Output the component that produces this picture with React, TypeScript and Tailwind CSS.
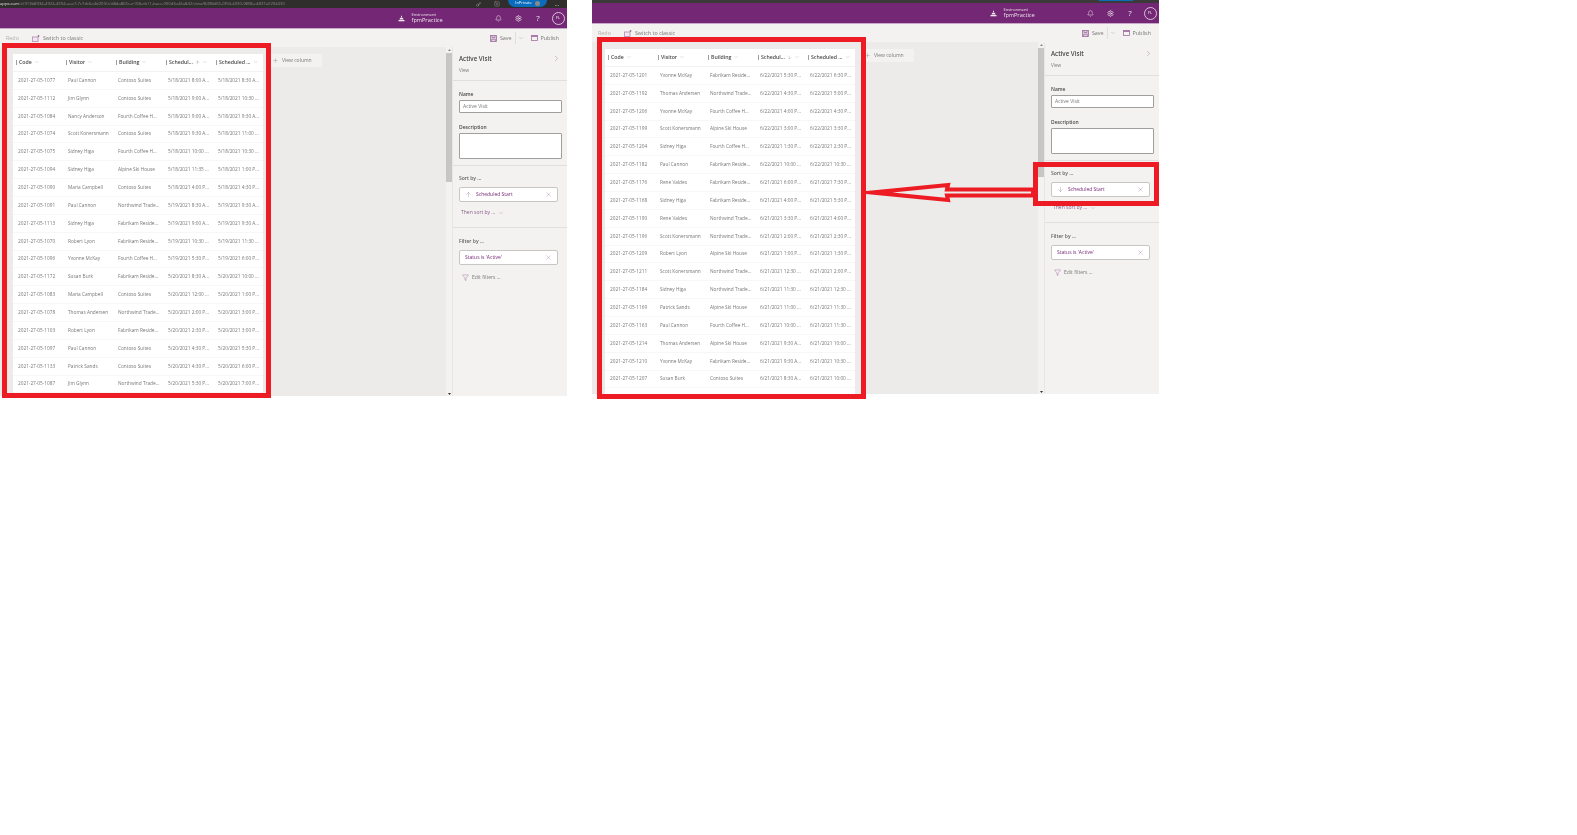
import type { ReactNode } from "react";
import { ArrowDown, ArrowUp, Bell, ChevronDown, ChevronRight, Filter, Key, Plus, Settings, SquarePlus, X } from "lucide-react";

type Row = [string, string, string, string, string];

const CF = "Contoso Suites";
const FC = "Fourth Coffee H...";
const NW = "Northwind Trade...";
const FR = "Fabrikam Reside...";
const AS = "Alpine Ski House";

const ascRows: Row[] = [
  ["1077", "Paul Cannon", CF, "5/18/2021 8:00 A...", "5/18/2021 8:30 A..."],
  ["1112", "Jim Glynn", CF, "5/18/2021 9:00 A...", "5/18/2021 10:30 ..."],
  ["1084", "Nancy Anderson", FC, "5/18/2021 9:00 A...", "5/18/2021 9:30 A..."],
  ["1074", "Scott Konersmann", CF, "5/18/2021 9:30 A...", "5/18/2021 11:00 ..."],
  ["1075", "Sidney Higa", FC, "5/18/2021 10:00 ...", "5/18/2021 10:30 ..."],
  ["1094", "Sidney Higa", AS, "5/18/2021 11:35 ...", "5/18/2021 1:00 P..."],
  ["1090", "Maria Campbell", CF, "5/18/2021 4:00 P...", "5/18/2021 4:30 P..."],
  ["1091", "Paul Cannon", NW, "5/19/2021 8:30 A...", "5/19/2021 9:30 A..."],
  ["1113", "Sidney Higa", FR, "5/19/2021 9:00 A...", "5/19/2021 9:30 A..."],
  ["1070", "Robert Lyon", FR, "5/19/2021 10:30 ...", "5/19/2021 11:30 ..."],
  ["1096", "Yvonne McKay", FC, "5/19/2021 5:30 P...", "5/19/2021 6:00 P..."],
  ["1172", "Susan Burk", FR, "5/20/2021 8:30 A...", "5/20/2021 10:00 ..."],
  ["1083", "Maria Campbell", CF, "5/20/2021 12:00 ...", "5/20/2021 1:00 P..."],
  ["1078", "Thomas Andersen", NW, "5/20/2021 2:00 P...", "5/20/2021 3:00 P..."],
  ["1103", "Robert Lyon", FR, "5/20/2021 2:30 P...", "5/20/2021 3:00 P..."],
  ["1097", "Paul Cannon", CF, "5/20/2021 4:30 P...", "5/20/2021 5:30 P..."],
  ["1133", "Patrick Sands", CF, "5/20/2021 4:30 P...", "5/20/2021 6:00 P..."],
  ["1087", "Jim Glynn", NW, "5/20/2021 5:30 P...", "5/20/2021 7:00 P..."],
];

const descRows: Row[] = [
  ["1201", "Yvonne McKay", FR, "6/22/2021 5:30 P...", "6/22/2021 6:30 P..."],
  ["1192", "Thomas Andersen", NW, "6/22/2021 4:30 P...", "6/22/2021 5:00 P..."],
  ["1206", "Yvonne McKay", FC, "6/22/2021 4:00 P...", "6/22/2021 4:30 P..."],
  ["1199", "Scott Konersmann", AS, "6/22/2021 3:00 P...", "6/22/2021 3:30 P..."],
  ["1204", "Sidney Higa", FC, "6/22/2021 1:30 P...", "6/22/2021 2:30 P..."],
  ["1182", "Paul Cannon", FR, "6/22/2021 10:00 ...", "6/22/2021 10:30 ..."],
  ["1176", "Rene Valdes", FR, "6/21/2021 6:00 P...", "6/21/2021 7:30 P..."],
  ["1168", "Sidney Higa", FR, "6/21/2021 4:00 P...", "6/21/2021 5:30 P..."],
  ["1190", "Rene Valdes", NW, "6/21/2021 3:30 P...", "6/21/2021 4:00 P..."],
  ["1196", "Scott Konersmann", NW, "6/21/2021 2:00 P...", "6/21/2021 2:30 P..."],
  ["1209", "Robert Lyon", AS, "6/21/2021 1:00 P...", "6/21/2021 1:30 P..."],
  ["1211", "Scott Konersmann", NW, "6/21/2021 12:30 ...", "6/21/2021 2:00 P..."],
  ["1184", "Sidney Higa", NW, "6/21/2021 11:30 ...", "6/21/2021 12:30 ..."],
  ["1169", "Patrick Sands", AS, "6/21/2021 11:00 ...", "6/21/2021 11:30 ..."],
  ["1163", "Paul Cannon", FC, "6/21/2021 10:00 ...", "6/21/2021 11:30 ..."],
  ["1214", "Thomas Andersen", AS, "6/21/2021 9:30 A...", "6/21/2021 10:00 ..."],
  ["1210", "Yvonne McKay", FR, "6/21/2021 9:30 A...", "6/21/2021 10:30 ..."],
  ["1207", "Susan Burk", CF, "6/21/2021 8:30 A...", "6/21/2021 10:00 ..."],
];

function HeaderCell({ label, sort }: { label: string; sort?: "asc" | "desc" }) {
  return (
    <div className="w-[50px] shrink-0 flex items-center pl-[3px]">
      <span className="w-[1px] h-[5px] bg-[#a19f9d] mr-[2px]" />
      <span className="font-semibold text-[5.2px] text-[#4a4847] whitespace-nowrap">{label}</span>
      {sort === "asc" && <ArrowUp className="ml-[2px] w-[5px] h-[5px] text-[#8a8886]" strokeWidth={1.5} />}
      {sort === "desc" && <ArrowDown className="ml-[2px] w-[5px] h-[5px] text-[#a19f9d]" strokeWidth={1.5} />}
      <ChevronDown className="ml-[2px] w-[6px] h-[6px] text-[#a19f9d]" strokeWidth={1.2} />
    </div>
  );
}

function Grid({ rows, sort }: { rows: Row[]; sort: "asc" | "desc" }) {
  return (
    <div className="w-[250px] h-full bg-white overflow-hidden shrink-0">
      <div className="h-[18px] flex items-center border-b border-[#f3f2f1]">
        <HeaderCell label="Code" />
        <HeaderCell label="Visitor" />
        <HeaderCell label="Building" />
        <HeaderCell label="Schedul..." sort={sort} />
        <HeaderCell label="Scheduled ..." />
      </div>
      {rows.map((r) => (
        <div key={r[0]} className="h-[17.86px] flex items-center border-b border-[#f8f7f6] text-[4.75px] text-[#7a7876]">
          <div className="w-[50px] pl-[5px] whitespace-nowrap">2021-27-05-{r[0]}</div>
          <div className="w-[50px] pl-[5px] whitespace-nowrap">{r[1]}</div>
          <div className="w-[50px] pl-[5px] whitespace-nowrap">{r[2]}</div>
          <div className="w-[50px] pl-[5px] whitespace-nowrap">{r[3]}</div>
          <div className="w-[50px] pl-[5px] whitespace-nowrap">{r[4]}</div>
        </div>
      ))}
    </div>
  );
}

function Chip({ children, label }: { children?: ReactNode; label: string }) {
  return (
    <div className="w-[99px] h-[15px] bg-white border border-[#c8c6c4] rounded-[2px] flex items-center px-[5px] text-[5px] text-[#742774]">
      {children}
      <span className="whitespace-nowrap">{label}</span>
      <X className="ml-auto w-[7px] h-[7px] text-[#8a5a8a]" strokeWidth={1} />
    </div>
  );
}

function Pane({ sort }: { sort: "asc" | "desc" }) {
  return (
    <div className="w-[115px] shrink-0 h-full bg-[#f3f2f1] flex flex-col text-[#4a4847] border-l border-[#e8e6e4]">
      <div className="h-[34px] border-b border-[#e1dfdd] px-[6px] pt-[7px] flex flex-col">
        <div className="flex items-center justify-between">
          <span className="font-semibold text-[6.2px] leading-[9px]">Active Visit</span>
          <ChevronRight className="w-[9px] h-[9px] text-[#8a6a8a]" strokeWidth={1} />
        </div>
        <span className="text-[4.6px] mt-[4px] text-[#797775]">View</span>
      </div>
      <div className="h-[85px] border-b border-[#e1dfdd] px-[6px] pt-[10px]">
        <div className="font-semibold text-[5px] leading-[7px]">Name</div>
        <div className="mt-[2px] w-[103px] h-[13px] bg-white border border-[#a19f9d] rounded-[1px] flex items-center px-[3px] text-[5px] text-[#797775]">Active Visit</div>
        <div className="mt-[11px] font-semibold text-[5px] leading-[7px]">Description</div>
        <div className="mt-[2px] w-[103px] h-[26px] bg-white border border-[#a19f9d] rounded-[1px]" />
      </div>
      <div className="h-[62px] border-b border-[#e1dfdd] px-[6px] pt-[9px]">
        <div className="font-semibold text-[5px] leading-[7px] text-[#605e5c]">Sort by ...</div>
        <div className="mt-[5px]">
          <Chip label="Scheduled Start">
            {sort === "asc" ? (
              <ArrowUp className="w-[7px] h-[7px] mr-[4px] text-[#8a5a8a]" strokeWidth={1} />
            ) : (
              <ArrowDown className="w-[7px] h-[7px] mr-[4px] text-[#8a5a8a]" strokeWidth={1} />
            )}
          </Chip>
        </div>
        <div className="mt-[7px] ml-[2px] flex items-center gap-[3px] text-[5px] text-[#8a5a8a]">
          Then sort by ...
          <ChevronDown className="w-[6px] h-[6px]" strokeWidth={1} />
        </div>
      </div>
      <div className="px-[6px] pt-[10px]">
        <div className="font-semibold text-[5px] leading-[7px] text-[#605e5c]">Filter by ...</div>
        <div className="mt-[5px]">
          <Chip label="Status is 'Active'" />
        </div>
        <div className="mt-[9px] ml-[3px] flex items-center gap-[3px] text-[5px] text-[#797775]">
          <Filter className="w-[7px] h-[7px] text-[#742774]" strokeWidth={1} />
          Edit filters ...
        </div>
      </div>
    </div>
  );
}

function SwitchIcon() {
  return (
    <svg className="ml-[13px] shrink-0" width="8" height="7" viewBox="0 0 8 7">
      <rect x="0.5" y="2" width="5.5" height="4.5" fill="#efe6ef" stroke="#b48ab4" strokeWidth="0.8" />
      <path d="M6.5 0v2M5.5 1h2" stroke="#8a5a8a" strokeWidth="0.7" />
    </svg>
  );
}

function SaveIcon() {
  return (
    <svg className="shrink-0" width="7" height="7" viewBox="0 0 7 7">
      <rect x="0.5" y="0.5" width="6" height="6" fill="#e3d3e3" stroke="#a06fa0" strokeWidth="0.8" />
      <path d="M2 0.5v2h3v-2M1.7 6.5v-2.3h3.6v2.3" fill="none" stroke="#8a5a8a" strokeWidth="0.6" />
    </svg>
  );
}

function PublishIcon() {
  return (
    <svg className="ml-[7px] shrink-0" width="7" height="6" viewBox="0 0 7 6">
      <rect x="0.5" y="0.5" width="6" height="5" fill="#f3f2f1" stroke="#a06fa0" strokeWidth="0.8" />
      <rect x="0.5" y="0.5" width="6" height="1.4" fill="#a06fa0" />
    </svg>
  );
}

function EnvironmentIcon() {
  return (
    <svg className="ml-auto mr-[7px] shrink-0" width="7" height="7" viewBox="0 0 7 7">
      <path d="M1.5 4.5a2 2 0 0 1 4 0z" fill="#efe6ef" />
      <rect x="0.5" y="5" width="6" height="1.3" fill="#efe6ef" />
      <rect x="3" y="0.8" width="1" height="1.4" fill="#efe6ef" />
    </svg>
  );
}

function Shot({ rows, sort, right }: { rows: Row[]; sort: "asc" | "desc"; right?: boolean }) {
  return (
    <div className={right ? "w-[567px] h-[394px] blur-[0.4px] flex flex-col overflow-hidden" : "w-[567px] h-[396px] blur-[0.4px] flex flex-col overflow-hidden"} style={{ fontFamily: '"Open Sans", "Liberation Sans", sans-serif' }}>
      {right ? (
        <div className="h-[3px] bg-[#3b3a39] shrink-0 flex items-start">
          <span className="ml-auto mr-[26px] w-[34px] h-[1px] bg-[#0a6cbd]" />
        </div>
      ) : (
        <div className="h-[8px] bg-[#2f2e2d] shrink-0 flex items-center text-[4.2px] text-[#8a8886] overflow-hidden">
          <span className="whitespace-nowrap w-[377px] overflow-hidden">
            <span className="text-[#e1dfdd]">apps.com</span>/e/913b8934-4924-4394-aaa7-7c7dc6a4d203/s/d8da865c-e108-eb11-bacc-000d3a44a842/view/8498d65-0f04-4030-9808-c4837a0294430
          </span>
          <Key className="ml-auto w-[5px] h-[5px] text-[#c8c6c4]" strokeWidth={1.5} />
          <SquarePlus className="ml-[13px] w-[6px] h-[6px] text-[#c8c6c4]" strokeWidth={1.2} />
          <span className="ml-[8px] w-[39px] h-[7px] -mt-[2px] rounded-b-full bg-[#0a6cbd] flex items-center justify-center gap-[3px] text-white text-[4px]">
            InPrivate
            <span className="w-[5px] h-[5px] rounded-full bg-[#8a8886]" />
          </span>
          <span className="ml-[8px] mr-[8px] text-white text-[5px] leading-none">...</span>
        </div>
      )}
      <div className="h-[21px] shrink-0 bg-[#742774] border-b border-[#c8a8c8] flex items-center text-white">
        <EnvironmentIcon />
        <div className="flex flex-col w-[83px] leading-none text-[#efe6ef]">
          <span className="text-[4.1px] leading-[5.5px]">Environment</span>
          <span className="text-[5.6px] leading-[7px]">fpmPractice</span>
        </div>
        <Bell className="w-[7px] h-[7px] mr-[13px]" strokeWidth={1.5} />
        <Settings className="w-[7px] h-[7px] mr-[13px]" strokeWidth={2} />
        <span className="w-[7px] mr-[10px] text-center text-[8px] leading-none text-[#efe6ef]">?</span>
        <span className="w-[13px] h-[13px] mr-[2.5px] rounded-full border border-[#d8c4d8] flex items-center justify-center text-[4px]">FL</span>
      </div>
      <div className="h-[18px] shrink-0 bg-[#f3f2f1] flex items-center text-[5.4px] text-[#797775]">
        <span className="ml-[6px] text-[#b3b0ad]">Redo</span>
        <SwitchIcon />
        <span className="ml-[3px]">Switch to classic</span>
        <span className="ml-auto">
          <SaveIcon />
        </span>
        <span className="ml-[3px]">Save</span>
        <span className="ml-[3px] w-[1px] h-[12px] bg-[#e1dfdd]" />
        <ChevronDown className="ml-[2px] w-[6px] h-[6px]" strokeWidth={1} />
        <PublishIcon />
        <span className="ml-[3px] mr-[8px]">Publish</span>
      </div>
      <div className="flex-1 min-h-0 flex bg-[#edebe9]">
        <div className="flex-1 flex min-w-0 pt-[7px] pl-[13px]">
          <Grid rows={rows} sort={sort} />
          <div className="ml-[5px] w-[54px] h-[13px] bg-[#f3f2f1] flex items-center text-[5px] text-[#797775]">
            <Plus className="ml-[4px] w-[7px] h-[7px]" strokeWidth={1} />
            <span className="ml-[3px] whitespace-nowrap">View column</span>
          </div>
        </div>
        <div className="w-[6px] shrink-0 bg-[#f3f2f1] flex flex-col items-stretch">
          <div className="h-[6px] flex items-center justify-center">
            <svg width="3" height="2" viewBox="0 0 3 2"><path d="M1.5 0 3 2H0z" fill="#8a8886" /></svg>
          </div>
          <div className="h-[129px] bg-[#c8c6c4]" />
          <div className="mt-auto h-[5px] flex items-center justify-center">
            <svg width="3" height="2" viewBox="0 0 3 2"><path d="M0 0h3L1.5 2z" fill="#323130" /></svg>
          </div>
        </div>
        <Pane sort={sort} />
      </div>
    </div>
  );
}

export default function App() {
  return (
    <div className="relative w-[1577px] h-[835px] bg-white overflow-hidden flex items-start">
      <Shot rows={ascRows} sort="asc" />
      <div className="ml-[25px]">
        <Shot rows={descRows} sort="desc" right />
      </div>
      {/* red annotations drawn over the screenshots */}
      <div className="absolute left-[2px] top-[43px] w-[269px] h-[355px] border-[5px] border-[#ed1c24]" />
      <div className="absolute left-[597px] top-[37px] w-[269px] h-[362px] border-[5px] border-[#ed1c24]" />
      <div className="absolute left-[1033px] top-[162px] w-[126px] h-[44px] border-[5px] border-[#ed1c24]" />
      <svg className="absolute left-[866px] top-[180px]" width="170" height="26" viewBox="0 0 170 26">
        <path d="M6 12.5 L82 5 L81 9.5 L167 9.5 L167 15.5 L81 15.5 L82 20 Z" fill="#edebe9" stroke="#ed1c24" strokeWidth="4" strokeMiterlimit="30" />
      </svg>
    </div>
  );
}
